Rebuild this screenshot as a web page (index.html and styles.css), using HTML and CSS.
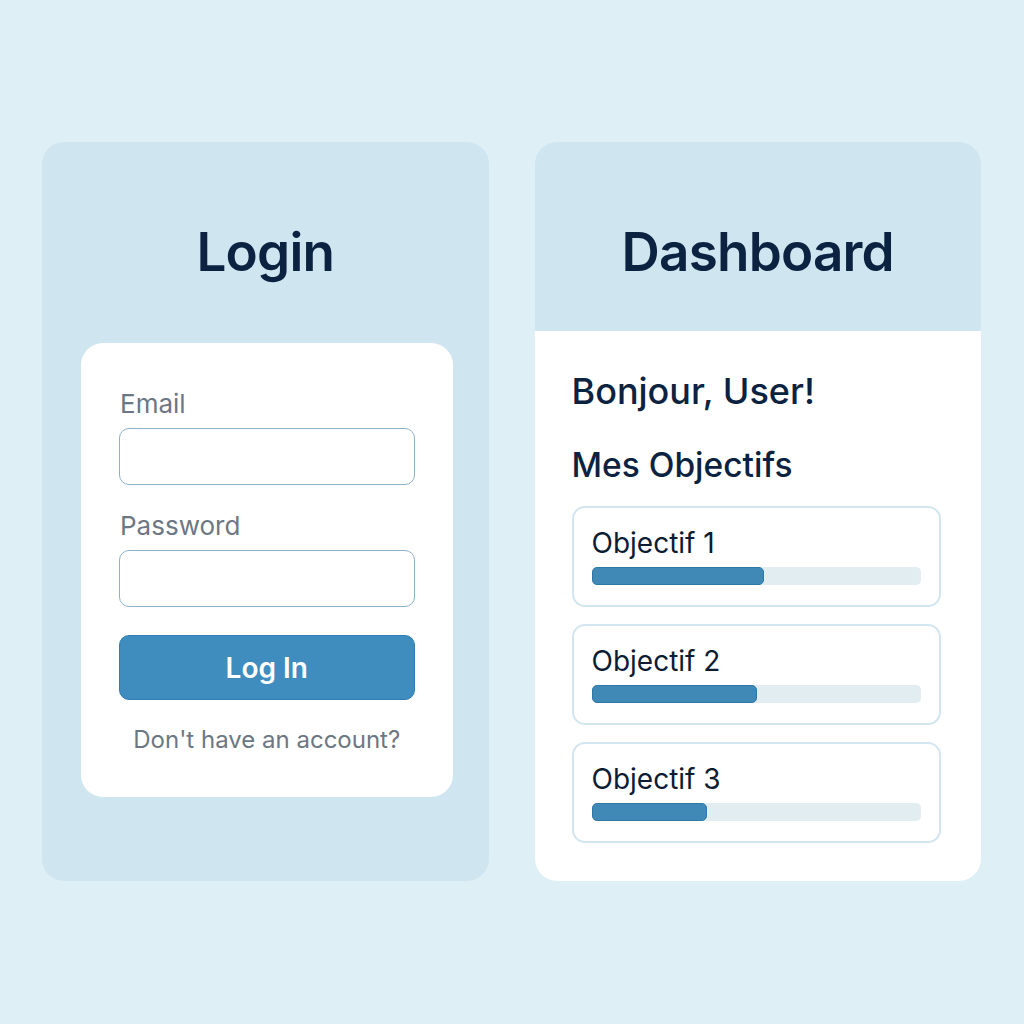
FILE: index.html
```html
<!DOCTYPE html>
<html lang="fr">
<head>
    <meta charset="UTF-8">
    <meta name="viewport" content="width=device-width, initial-scale=1.0">
    <title>Login / Dashboard</title>
    <link rel="stylesheet" href="styles.css">
</head>
<body>
    <div class="screens">
        <!-- Écran de connexion -->
        <section class="panel login">
            <h1 class="title">Login</h1>
            <form class="login-card">
                <label class="field-label" for="email">Email</label>
                <input class="field" type="email" id="email">
                <label class="field-label" for="password">Password</label>
                <input class="field" type="password" id="password">
                <button type="button" class="btn">Log In</button>
                <p class="signup">Don't have an account?</p>
            </form>
        </section>

        <!-- Tableau de bord -->
        <section class="panel dashboard">
            <header class="dash-header">
                <h1 class="title">Dashboard</h1>
            </header>
            <div class="dash-body">
                <h2 class="greeting">Bonjour, User!</h2>
                <h3 class="section-title">Mes Objectifs</h3>
                <div class="goals">
                    <div class="goal">
                        <div class="goal-name">Objectif 1</div>
                        <div class="track"><div class="fill" style="width: 52.5%"></div></div>
                    </div>
                    <div class="goal">
                        <div class="goal-name">Objectif 2</div>
                        <div class="track"><div class="fill" style="width: 50.3%"></div></div>
                    </div>
                    <div class="goal">
                        <div class="goal-name">Objectif 3</div>
                        <div class="track"><div class="fill" style="width: 35%"></div></div>
                    </div>
                </div>
            </div>
        </section>
    </div>
</body>
</html>
```

FILE: styles.css
```css
body {
    font-family: 'Inter', 'Noto Sans', sans-serif;
    background-color: #dfeff6;
    color: #0b2240;
    margin: 0;
    padding: 0;
}
.screens {
    display: flex;
    gap: 46px;
    padding: 142px 43px 0 42px;
}
.panel {
    flex: 1;
    height: 739px;
    border-radius: 22px;
    background-color: #cfe5f0;
    box-sizing: border-box;
    overflow: hidden;
}
.title {
    margin: 0;
    font-size: 53px;
    line-height: 64px;
    font-weight: 600;
    letter-spacing: -0.8px;
    text-align: center;
    color: #0b2240;
}

/* Login */
.login {
    padding-top: 78px;
}
.login-card {
    margin: 59px 36px 0 39px;
    background-color: #ffffff;
    border-radius: 22px;
    padding: 46px 38px 42px 38px;
    display: flex;
    flex-direction: column;
}
.field-label {
    font-size: 26px;
    line-height: 30px;
    color: #6c7783;
    margin-left: 1px;
}
.field {
    height: 57px;
    margin: 9px 0 26px 0;
    border: 1.5px solid #8eb1c9;
    border-radius: 10px;
    box-sizing: border-box;
    background: #fff;
}
.field:last-of-type {
    margin-bottom: 28px;
}
.btn {
    height: 65px;
    border: 1px solid #2f7db3;
    border-radius: 10px;
    background-color: #3f8cbf;
    color: #ffffff;
    font-family: inherit;
    font-size: 28px;
    font-weight: 600;
    cursor: pointer;
}
.signup {
    margin: 25px 0 0 0;
    font-size: 24px;
    line-height: 30px;
    text-align: center;
    color: #6c7783;
}

/* Dashboard */
.dashboard {
    display: flex;
    flex-direction: column;
}
.dash-header {
    height: 189px;
    padding-top: 78px;
    box-sizing: border-box;
}
.dash-body {
    flex: 1;
    background-color: #ffffff;
    padding: 40px 40px 0 37px;
}
.greeting {
    margin: 0;
    font-size: 36px;
    line-height: 40px;
    font-weight: 500;
}
.section-title {
    margin: 35px 0 22px 0;
    font-size: 33.5px;
    line-height: 38px;
    font-weight: 500;
}
.goals {
    display: flex;
    flex-direction: column;
    gap: 17px;
}
.goal {
    border: 2px solid #d3e6f0;
    border-radius: 13px;
    padding: 19px 18px 20px 18px;
}
.goal-name {
    font-size: 28px;
    line-height: 32px;
    color: #0b1c33;
}
.track {
    margin-top: 8px;
    height: 18px;
    border-radius: 5px;
    background-color: #e2edf2;
}
.fill {
    height: 100%;
    border: 1px solid #2e77a8;
    border-radius: 5px;
    background-color: #4088b6;
    box-sizing: border-box;
}
```
